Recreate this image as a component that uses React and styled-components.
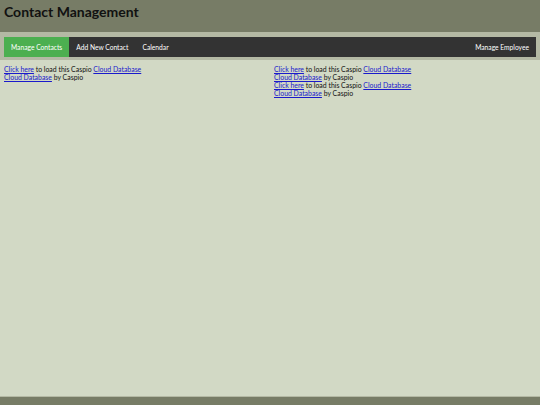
import React from 'react';
import styled, { createGlobalStyle } from 'styled-components';

const GlobalStyle = createGlobalStyle`
  html, body {
    margin: 0;
    padding: 0;
    height: 100%;
  }
  body {
    background: #d2d9c5;
    font-family: Lato, "DejaVu Sans", sans-serif;
  }
  #root {
    height: 100%;
  }
`;

const Page = styled.div`
  display: flex;
  flex-direction: column;
  min-height: 100vh;
`;

const Header = styled.header`
  height: 32px;
  box-sizing: border-box;
  background: #777c66;
  padding: 3px 4px 0;
`;

const Title = styled.h1`
  margin: 0;
  font-size: 14px;
  line-height: 17px;
  font-weight: bold;
  color: #111;
`;

const NavWrap = styled.div`
  background: #b4b9a4;
  padding: 5px 4px 3px;
`;

const Nav = styled.nav`
  display: flex;
  height: 20px;
  background: #333333;
`;

const NavItem = styled.a`
  display: flex;
  align-items: center;
  padding: 0 7px;
  font-size: 6.7px;
  color: #fff;
  text-decoration: none;
  background: ${(p) => (p.$active ? '#4caf50' : 'transparent')};
  margin-left: ${(p) => (p.$right ? 'auto' : '0')};
`;

const Content = styled.main`
  flex: 1;
  display: grid;
  grid-template-columns: 1fr 1fr;
  padding-top: 5px;
`;

const Column = styled.div`
  padding: 0 4px;
  font-size: 6.9px;
  line-height: 8px;
  color: #111;
`;

const Link = styled.a`
  color: #1a1acc;
  text-decoration: underline;
`;

const Footer = styled.footer`
  height: 8px;
  background: #777c66;
  border-top: 1px solid #b4b9a4;
`;

const LoadBlock = () => (
  <>
    <div>
      <Link href="#">Click here</Link> to load this Caspio <Link href="#">Cloud Database</Link>
    </div>
    <div>
      <Link href="#">Cloud Database</Link> by Caspio
    </div>
  </>
);

export default function App() {
  return (
    <Page>
      <GlobalStyle />
      <Header>
        <Title>Contact Management</Title>
      </Header>
      <NavWrap>
        <Nav>
          <NavItem href="#" $active>Manage Contacts</NavItem>
          <NavItem href="#">Add New Contact</NavItem>
          <NavItem href="#">Calendar</NavItem>
          <NavItem href="#" $right>Manage Employee</NavItem>
        </Nav>
      </NavWrap>
      <Content>
        <Column>
          <LoadBlock />
        </Column>
        <Column>
          <LoadBlock />
          <LoadBlock />
        </Column>
      </Content>
      <Footer />
    </Page>
  );
}
